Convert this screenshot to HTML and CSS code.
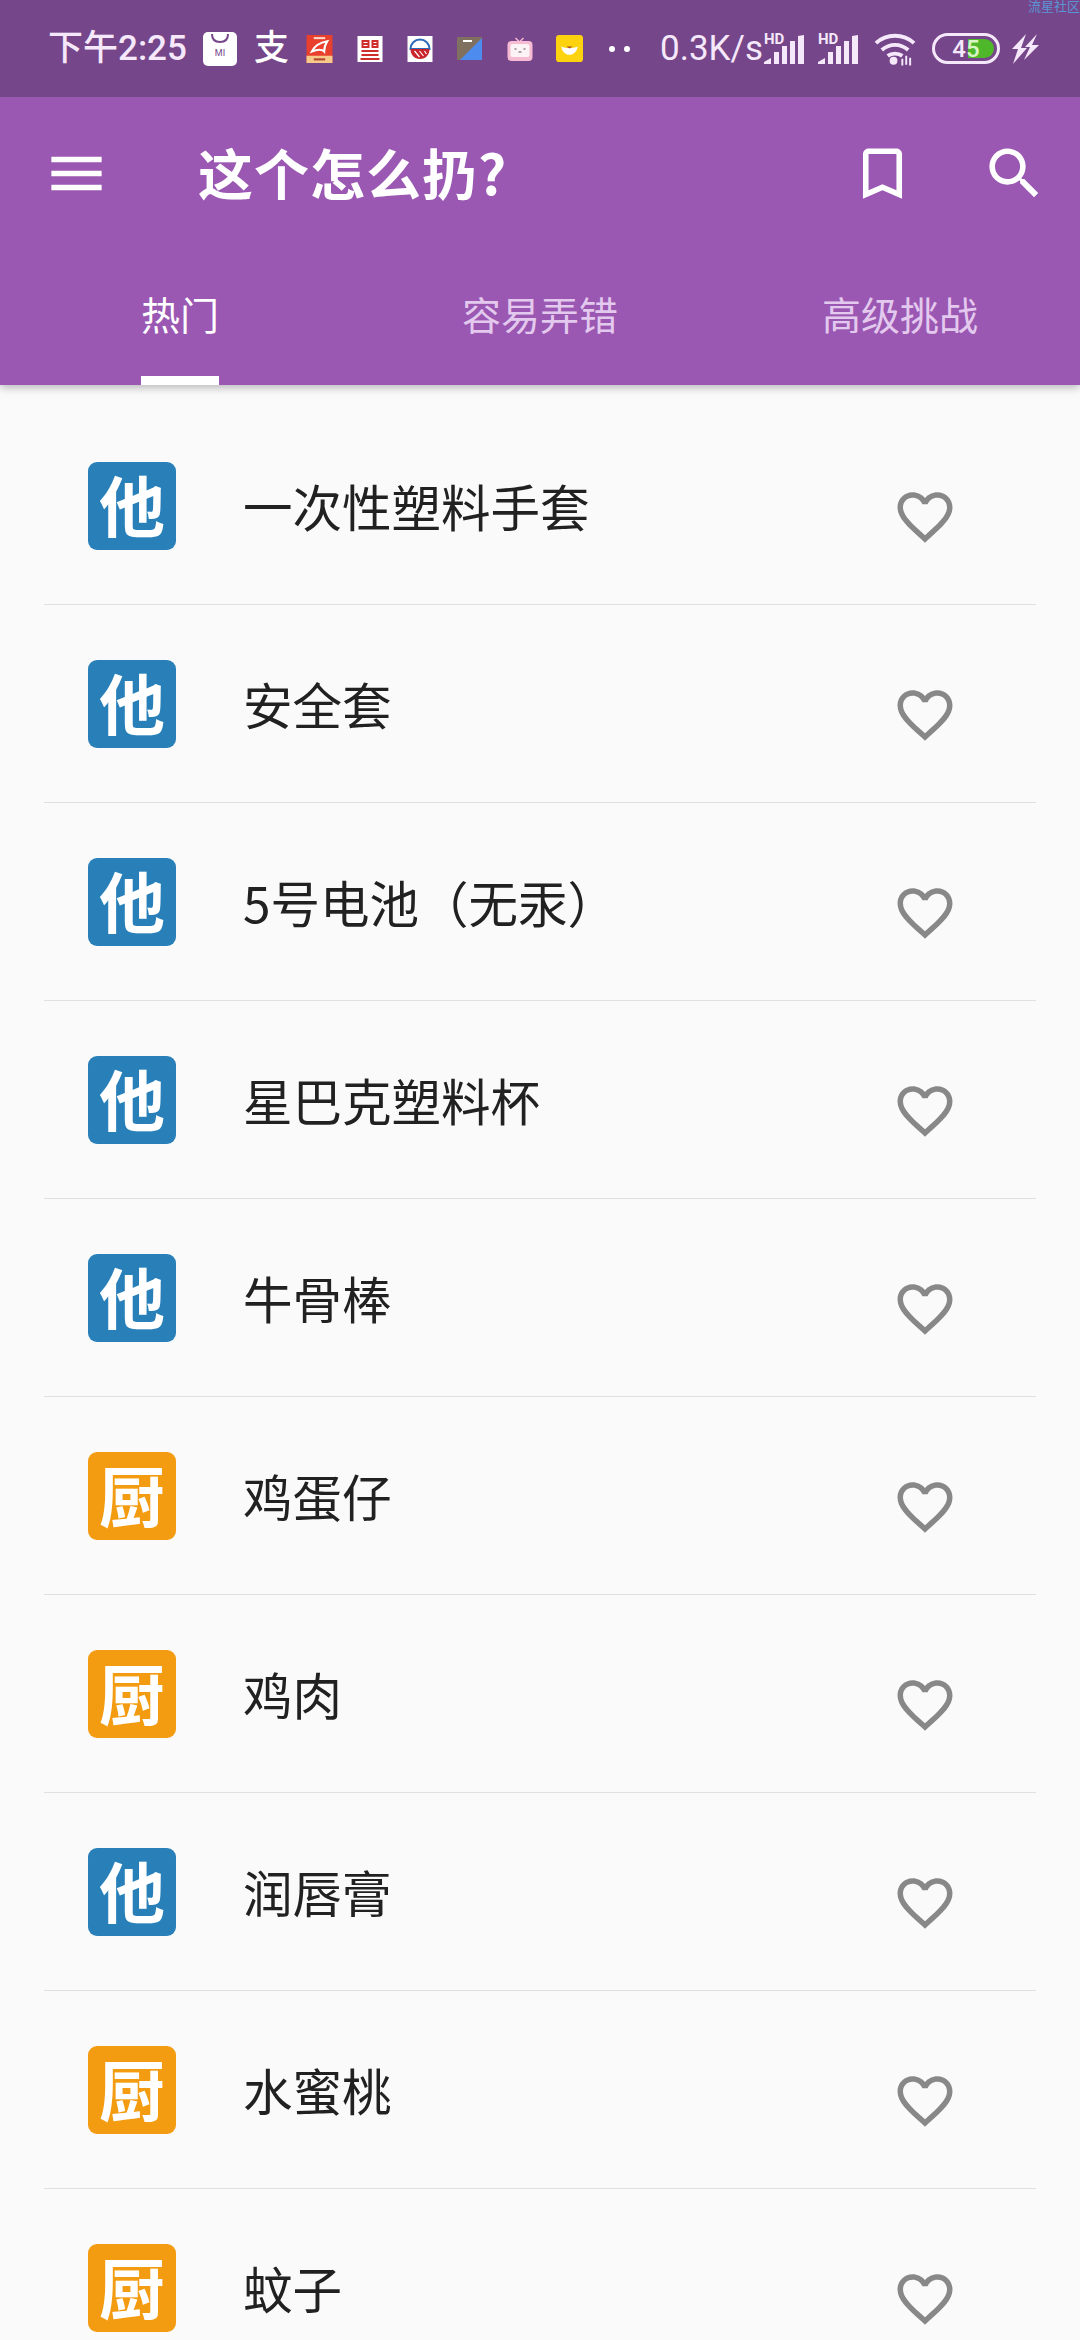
FILE: index.html
```html
<!DOCTYPE html>
<html lang="zh-CN">
<head>
    <meta charset="UTF-8">
    <meta name="viewport" content="width=device-width, initial-scale=1.0">
    <title>这个怎么扔?</title>
    <link rel="stylesheet" href="styles.css">
</head>
<body>
    <svg class="defs" width="0" height="0">
        <symbol id="heart" viewBox="0 0 24 24">
            <path d="M16.5 3c-1.74 0-3.41.81-4.5 2.09C10.91 3.81 9.24 3 7.5 3 4.42 3 2 5.42 2 8.5c0 3.78 3.4 6.86 8.55 11.54L12 21.35l1.45-1.32C18.6 15.36 22 12.28 22 8.5 22 5.42 19.58 3 16.5 3zm-4.4 15.55l-.1.1-.1-.1C7.14 14.24 4 11.39 4 8.5 4 6.5 5.5 5 7.5 5c1.54 0 3.04.99 3.57 2.36h1.87C13.46 5.99 14.96 5 16.5 5c2 0 3.5 1.5 3.5 3.5 0 2.89-3.14 5.74-7.9 10.05z"/>
        </symbol>
        <symbol id="signal" viewBox="0 0 40 30">
            <path d="M0 30v-2l7-4v6zM10 30V18h5v12zM18 30V12h5v18zM26 30V7h5v23zM34 30V2l6-1v29z"/>
        </symbol>
    </svg>

    <header class="app-header">
        <div class="status-bar">
            <span class="watermark">流星社区</span>
            <span class="clock">下午2:25</span>

            <!-- icones de notificacao -->
            <div class="mi-icon gap-17">
                <svg width="20" height="10" viewBox="0 0 20 10"><path d="M2 0c0 5 3 8 8 8s8-3 8-8" fill="none" stroke="#754689" stroke-width="2"/></svg>
                <span class="mi-text">MI</span>
            </div>
            <span class="alipay gap-17">支</span>
            <svg class="gap-18" width="27" height="28" viewBox="0 0 25 27">
                <rect width="25" height="27" fill="#e8402c"/>
                <rect y="20" width="25" height="7" fill="#f7c98a"/>
                <path d="M5 16c3-6 9-9 15-10-2 3-3 6-3 10-3-3-7-2-12 0z" fill="none" stroke="#fff" stroke-width="2"/>
                <rect x="7" y="2" width="11" height="2" fill="#fbd5c8"/>
                <rect x="7" y="22.5" width="11" height="2" fill="#b0452c"/>
            </svg>
            <svg class="gap-24" width="26" height="26" viewBox="0 0 25 26">
                <rect width="25" height="26" fill="#fff"/>
                <path d="M4 4h8v8H4zM14 4h7v8h-7zM4 14h17v2H4zM4 18h17v2H4zM3 22h19v2H3z" fill="#cf2c2c"/>
                <path d="M6 6h4v1H6zM6 9h4v1H6zM16 6h3v1h-3zM16 9h3v1h-3z" fill="#fff"/>
            </svg>
            <svg class="gap-24" width="26" height="26" viewBox="0 0 25 26">
                <rect width="25" height="26" fill="#fff"/>
                <path d="M3 13a9.500 9.500 0 0 1 19 0z" fill="none" stroke="#2b68b5" stroke-width="2"/>
                <path d="M3 13h19c0 6-4 10-9.500 10S3 19 3 13z" fill="#c9242c"/>
                <path d="M7 15l5 6M12 15l4 5M17 15l2 3" stroke="#fff" stroke-width="1.200"/>
            </svg>
            <svg class="gap-24" width="25" height="23" viewBox="0 0 25 23">
                <rect width="25" height="23" rx="1" fill="#7f705f"/>
                <path d="M25 1v22H3z" fill="#4e8bee"/>
                <rect x="6" y="3" width="9" height="2" fill="#fff"/>
            </svg>
            <svg class="gap-25" width="26" height="24" viewBox="0 0 25 24">
                <path d="M8 1l4 4 4-4" fill="none" stroke="#f5b7d0" stroke-width="1.500"/>
                <rect y="4" width="25" height="20" rx="4" fill="#f6bcd3"/>
                <rect x="3" y="7" width="19" height="13" rx="2" fill="#fbf3f6"/>
                <path d="M7 12h2M16 12h2M11 15h3" stroke="#555" stroke-width="1"/>
            </svg>
            <svg class="gap-23" width="27" height="27" viewBox="0 0 26 26">
                <rect width="26" height="26" rx="3" fill="#fdd20f"/>
                <path d="M5 11c5 2 11 2 16 0-1 5-4 8-8 8s-7-3-8-8z" fill="#fff"/>
                <path d="M10 11h6l-3 2z" fill="#a8492a"/>
            </svg>
            <div class="dots gap-26"><i></i><i></i></div>

            <span class="speed gap-30">0.3K/s</span>

            <div class="signal gap-6">
                <svg width="40" height="30"><use href="#signal"/></svg>
                <span class="hd">HD</span>
            </div>
            <div class="signal gap-14">
                <svg width="40" height="30"><use href="#signal"/></svg>
                <span class="hd">HD</span>
            </div>

            <svg class="gap-16" width="42" height="34" viewBox="0 0 43 34">
                <path d="M2 11c11-10 28-10 39 0M8 18c8-7 19-7 27 0M14 24c4-3 11-3 15 0" fill="none" stroke="#f6e8fb" stroke-width="4"/>
                <circle cx="20" cy="29" r="4" fill="#f6e8fb"/>
                <path d="M33 24v9M29 27v7M37 26v8" stroke="#f6e8fb" stroke-width="2"/>
            </svg>

            <div class="battery gap-16">
                <span class="battery-fill"></span>
                <span class="battery-num">4<b>5</b></span>
            </div>

            <svg class="gap-11" width="28" height="30" viewBox="0 0 28 30">
                <path d="M15 0L1 15h6l-5 15 14-16h-6zM26 0L14 13h5l-6 13 15-15h-7z" fill="#f6e8fb"/>
            </svg>
        </div>

        <div class="toolbar">
            <svg class="tool-icon" viewBox="0 0 24 24"><path d="M3 18h18v-2H3v2zm0-5h18v-2H3v2zm0-5h18V6H3v2z"/></svg>
            <h1 class="title">这个怎么扔?</h1>
            <svg class="tool-icon" viewBox="0 0 24 24"><path d="M17 3H7c-1.100 0-1.990.9-1.990 2L5 21l7-3 7 3V5c0-1.100-.9-2-2-2zm0 15l-5-2.180L7 18V5h10v13z"/></svg>
            <svg class="tool-icon search" viewBox="0 0 24 24"><path d="M15.500 14h-.79l-.28-.27C15.410 12.590 16 11.110 16 9.500 16 5.910 13.090 3 9.500 3S3 5.910 3 9.500 5.910 16 9.500 16c1.610 0 3.090-.59 4.230-1.570l.27.28v.79l5 4.990L20.490 19l-4.990-5zm-6 0C7.010 14 5 11.990 5 9.500S7.010 5 9.500 5 14 7.010 14 9.500 11.990 14 9.500 14z"/></svg>
        </div>

        <nav class="tabs">
            <a class="tab active"><span>热门</span></a>
            <a class="tab"><span>容易弄错</span></a>
            <a class="tab"><span>高级挑战</span></a>
        </nav>
    </header>

    <main class="list">
        <div class="row">
            <span class="badge other">他</span>
            <span class="name">一次性塑料手套</span>
            <svg class="heart"><use href="#heart"/></svg>
        </div>
        <div class="row">
            <span class="badge other">他</span>
            <span class="name">安全套</span>
            <svg class="heart"><use href="#heart"/></svg>
        </div>
        <div class="row">
            <span class="badge other">他</span>
            <span class="name">5号电池（无汞）</span>
            <svg class="heart"><use href="#heart"/></svg>
        </div>
        <div class="row">
            <span class="badge other">他</span>
            <span class="name">星巴克塑料杯</span>
            <svg class="heart"><use href="#heart"/></svg>
        </div>
        <div class="row">
            <span class="badge other">他</span>
            <span class="name">牛骨棒</span>
            <svg class="heart"><use href="#heart"/></svg>
        </div>
        <div class="row">
            <span class="badge kitchen">厨</span>
            <span class="name">鸡蛋仔</span>
            <svg class="heart"><use href="#heart"/></svg>
        </div>
        <div class="row">
            <span class="badge kitchen">厨</span>
            <span class="name">鸡肉</span>
            <svg class="heart"><use href="#heart"/></svg>
        </div>
        <div class="row">
            <span class="badge other">他</span>
            <span class="name">润唇膏</span>
            <svg class="heart"><use href="#heart"/></svg>
        </div>
        <div class="row">
            <span class="badge kitchen">厨</span>
            <span class="name">水蜜桃</span>
            <svg class="heart"><use href="#heart"/></svg>
        </div>
        <div class="row">
            <span class="badge kitchen">厨</span>
            <span class="name">蚊子</span>
            <svg class="heart"><use href="#heart"/></svg>
        </div>
    </main>
</body>
</html>
```

FILE: styles.css
```css
html, body {
    margin: 0;
    padding: 0;
}

body {
    width: 1080px;
    height: 2340px;
    overflow: hidden;
    background-color: #fafafa;
    font-family: "Noto Sans CJK SC", "Noto Sans", sans-serif;
    color: #212121;
}

.defs {
    position: absolute;
}

.app-header {
    position: relative;
    background-color: #9a58b2;
    box-shadow: 0 3px 8px rgba(0, 0, 0, 0.25);
}

/* barra de status */
.status-bar {
    position: relative;
    display: flex;
    align-items: center;
    height: 97px;
    padding-left: 48px;
    background-color: #754689;
    color: #f6e8fb;
    font-family: Roboto, "Noto Sans CJK SC", sans-serif;
}

.status-bar > svg,
.status-bar > div,
.status-bar > span {
    flex: none;
}

.gap-6 { margin-left: 6px; }
.gap-11 { margin-left: 11px; }
.gap-14 { margin-left: 14px; }
.gap-16 { margin-left: 16px; }
.gap-17 { margin-left: 17px; }
.gap-18 { margin-left: 18px; }
.gap-23 { margin-left: 23px; }
.gap-24 { margin-left: 24px; }
.gap-25 { margin-left: 25px; }
.gap-26 { margin-left: 26px; }
.gap-30 { margin-left: 30px; }

.watermark {
    position: absolute;
    top: 0;
    right: 0;
    font-size: 13px;
    line-height: 14px;
    color: #5b95d6;
}

.clock {
    width: 138px;
    font-size: 35px;
    font-weight: 500;
    line-height: 40px;
    white-space: nowrap;
}

.mi-icon {
    display: flex;
    flex-direction: column;
    align-items: center;
    box-sizing: border-box;
    width: 34px;
    height: 34px;
    padding-top: 2px;
    background-color: #fff;
    border-radius: 5px;
}

.mi-text {
    font-size: 9px;
    line-height: 12px;
    margin-top: 3px;
    color: #754689;
}

.alipay {
    width: 34px;
    font-size: 35px;
    font-weight: 500;
    line-height: 38px;
    color: #fff;
}

.dots {
    display: flex;
    gap: 9px;
    width: 21px;
}

.dots i {
    width: 6px;
    height: 6px;
    border-radius: 50%;
    background-color: #fff;
}

.speed {
    width: 98px;
    font-size: 35px;
    line-height: 40px;
    white-space: nowrap;
}

.signal {
    position: relative;
    width: 40px;
    height: 30px;
}

.signal svg {
    display: block;
    fill: #f6e8fb;
}

.hd {
    position: absolute;
    top: -2px;
    left: 0;
    font-size: 15px;
    font-weight: 700;
    line-height: 14px;
}

.battery {
    position: relative;
    display: flex;
    align-items: center;
    justify-content: center;
    box-sizing: border-box;
    width: 68px;
    height: 31px;
    border: 3px solid #f6e8fb;
    border-radius: 16px;
}

.battery-fill {
    position: absolute;
    top: 3px;
    bottom: 3px;
    left: 33px;
    right: 3px;
    background-color: #4fb82a;
    border-radius: 0 10px 10px 0;
}

.battery-num {
    position: relative;
    font-size: 24px;
    font-weight: 500;
    line-height: 24px;
}

.battery-num b {
    font-weight: 500;
    color: #d7f5c4;
}

/* barra de titulo */
.toolbar {
    display: flex;
    align-items: center;
    height: 67px;
    padding: 43px 32px 0 43px;
}

.tool-icon {
    width: 67px;
    height: 67px;
    flex: none;
    fill: #fff;
}

.tool-icon.search {
    margin-left: 65px;
}

.title {
    flex: 1;
    margin: 0 0 4px 88px;
    font-size: 55px;
    font-weight: 700;
    line-height: 65px;
    letter-spacing: 1px;
    color: #fff;
}

/* abas */
.tabs {
    display: flex;
    height: 178px;
}

.tab {
    flex: 1;
    display: flex;
    justify-content: center;
    color: #e3c9ee;
    font-size: 39px;
    line-height: 58px;
}

.tab span {
    box-sizing: border-box;
    height: 178px;
    padding-top: 77px;
}

.tab.active {
    color: #fff;
}

.tab.active span {
    border-bottom: 9px solid #fff;
}

/* lista */
.list {
    padding-top: 22px;
}

.row {
    display: flex;
    align-items: center;
    box-sizing: border-box;
    height: 198px;
    margin: 0 44px;
    padding: 55px 0 54px 44px;
    border-bottom: 1px solid #e0e0e0;
}

.badge {
    flex: none;
    width: 88px;
    height: 88px;
    border-radius: 9px;
    text-align: center;
    font-size: 66px;
    font-weight: 700;
    line-height: 82px;
    color: #fff;
}

.badge.other {
    background-color: #2980b9;
}

.badge.kitchen {
    background-color: #f39c12;
}

.name {
    flex: 1;
    margin-left: 67px;
    font-size: 49.5px;
    line-height: 60px;
    white-space: nowrap;
}

.heart {
    flex: none;
    width: 66px;
    height: 66px;
    margin: 22px 78px 0 0;
    fill: #888;
}
```
